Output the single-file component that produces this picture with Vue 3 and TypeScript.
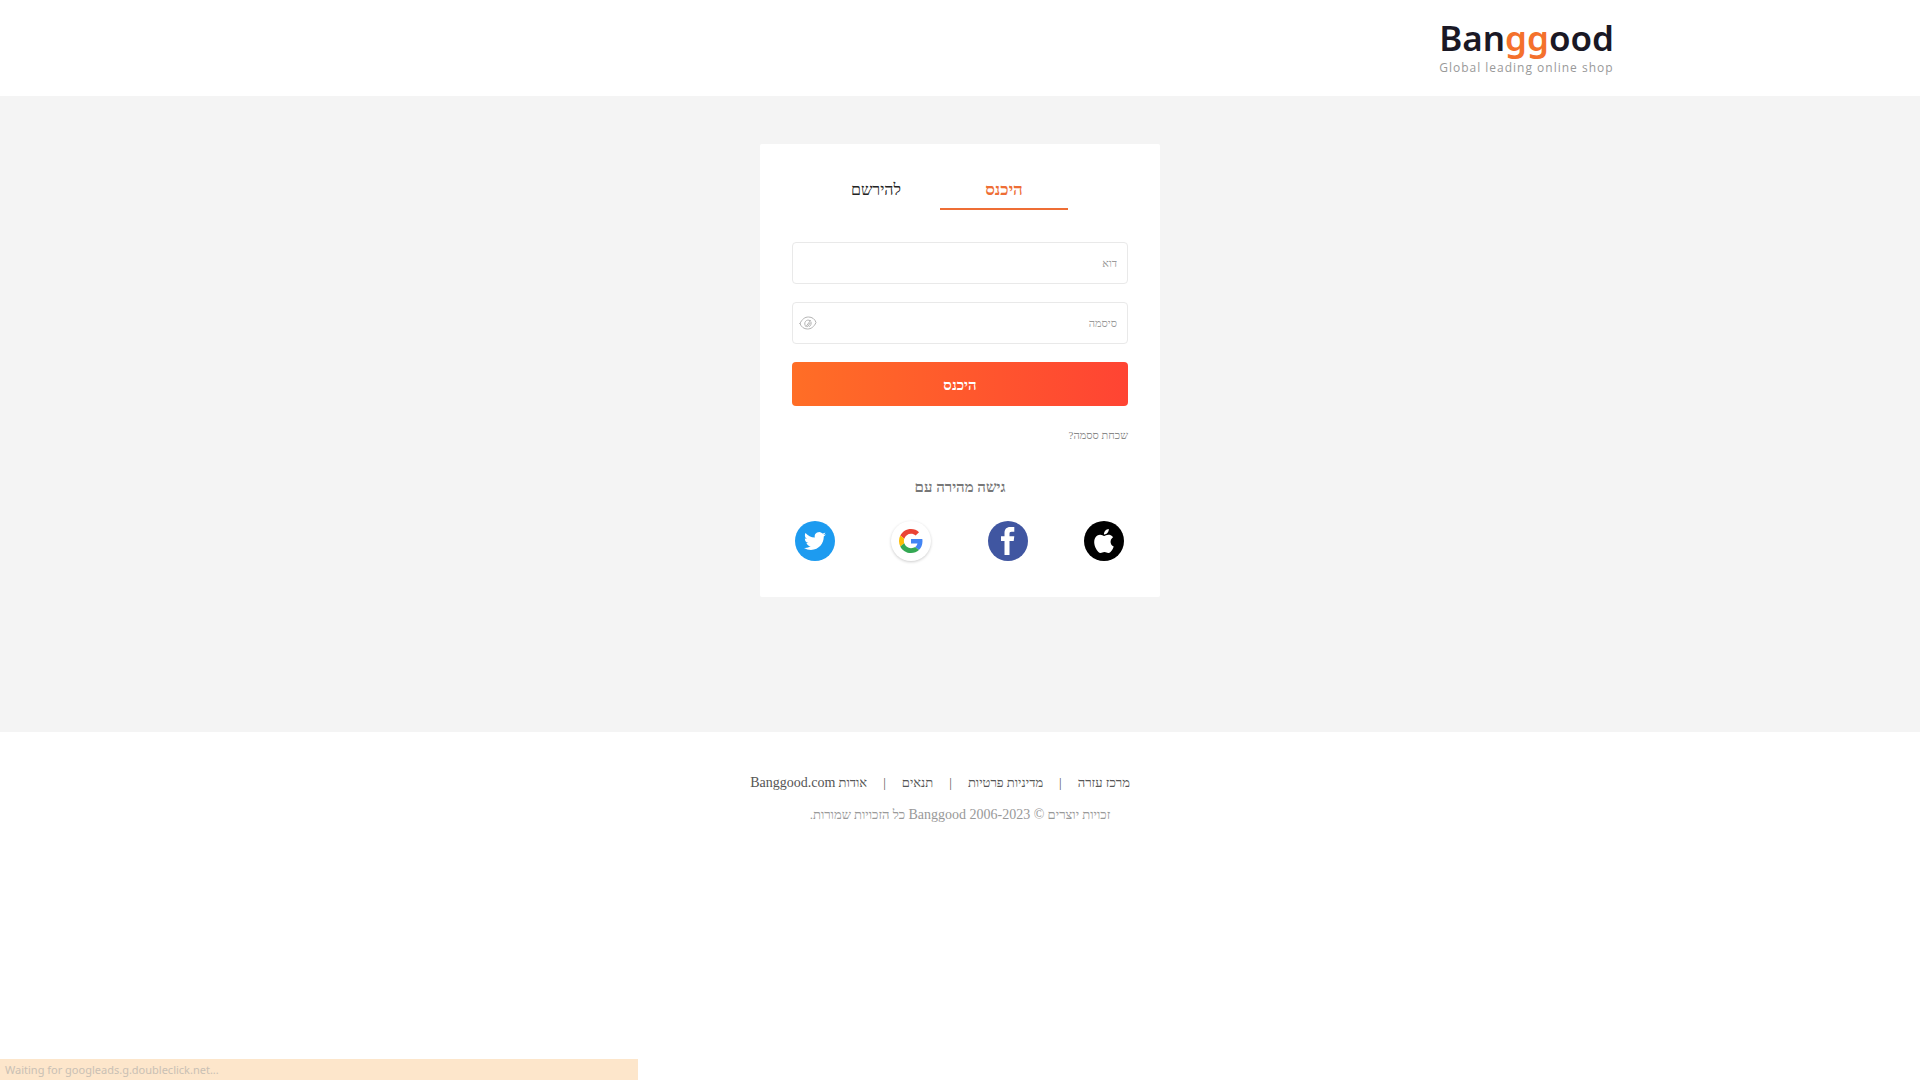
<script setup lang="ts">
import { ref } from 'vue'

type Tab = 'login' | 'register'

interface FooterLink {
  text: string
  brand?: string
}

const tab = ref<Tab>('login')
const email = ref('')
const password = ref('')
const showPassword = ref(false)

const footerLinks: FooterLink[] = [
  { text: 'מרכז עזרה' },
  { text: 'מדיניות פרטיות' },
  { text: 'תנאים' },
  { text: 'אודות', brand: 'Banggood.com' },
]
</script>

<template>
  <div class="page" dir="rtl" lang="he">
    <header class="header">
      <div class="header-inner">
        <a class="logo" href="#" dir="ltr">
          <span class="logo-word">Ban<span class="logo-accent">gg</span>ood</span>
          <span class="logo-tagline">Global leading online shop</span>
        </a>
      </div>
    </header>

    <main class="main">
      <section class="card">
        <div class="tabs">
          <button type="button" class="tab" :class="{ active: tab === 'login' }" @click="tab = 'login'">היכנס</button>
          <button type="button" class="tab" :class="{ active: tab === 'register' }" @click="tab = 'register'">להירשם</button>
        </div>

        <form class="form" @submit.prevent>
          <div class="field">
            <input v-model="email" type="text" placeholder="דוא" aria-label="דוא" />
          </div>
          <div class="field">
            <input
              v-model="password"
              :type="showPassword ? 'text' : 'password'"
              placeholder="סיסמה"
              aria-label="סיסמה"
            />
            <button type="button" class="eye" aria-label="סיסמה" @click="showPassword = !showPassword">
              <svg viewBox="0 0 18 14" width="18" height="14" fill="none" stroke="#b4b4b4" stroke-linecap="round">
                <path d="M1 7.500C3 3 6 1 9.500 1c3.500 0 6.500 2 7.500 5.500-2 4.500-5 6.500-8.500 6.500S2 11 1 7.500z" />
                <path d="M7 10.500C5.500 9.500 5.300 6.800 6.600 5.300 7.700 4 9.500 3.700 10.800 4.500M12 6c.5 1.700 0 3.500-1.500 4.500M7 10.500l4.500-6M8.500 10.800l2.500-3.500" />
              </svg>
            </button>
          </div>
          <button type="submit" class="submit">היכנס</button>
        </form>

        <a class="forgot" href="#">שכחת ססמה?</a>

        <h2 class="quick">גישה מהירה עם</h2>
        <div class="social">
          <a class="apple" href="#" aria-label="Apple">
            <svg viewBox="0 0 24 24" width="24" height="26" fill="#fff">
              <path d="M12.152 6.896c-.948 0-2.415-1.078-3.960-1.040-2.040.027-3.910 1.183-4.961 3.014-2.117 3.675-.546 9.103 1.519 12.090 1.013 1.454 2.208 3.090 3.792 3.039 1.520-.065 2.090-.987 3.935-.987 1.831 0 2.350.987 3.960.948 1.637-.026 2.676-1.480 3.676-2.948 1.156-1.688 1.636-3.325 1.662-3.415-.039-.013-3.182-1.221-3.220-4.857-.026-3.040 2.480-4.494 2.597-4.559-1.429-2.090-3.623-2.324-4.390-2.376-2-.156-3.675 1.090-4.610 1.090zM15.530 3.830c.843-1.012 1.400-2.427 1.245-3.830-1.207.052-2.662.805-3.532 1.818-.780.896-1.454 2.338-1.273 3.714 1.338.104 2.715-.688 3.559-1.701" />
            </svg>
          </a>
          <a class="facebook" href="#" aria-label="Facebook">
            <svg viewBox="0 0 14 28" width="14" height="28" fill="#fff">
              <path d="M3.500 28V14H0V9.200h3.500V6.300C3.500 2.200 5.400 0 9.300 0h4v4.800h-2.600c-1.900 0-2.200.8-2.200 2.200v2.200h4.800L12.700 14H8.500v14z" />
            </svg>
          </a>
          <a class="google" href="#" aria-label="Google">
            <svg viewBox="0 0 48 48" width="24" height="24">
              <path fill="#EA4335" d="M24 9.500c3.540 0 6.710 1.220 9.210 3.600l6.850-6.850C35.900 2.380 30.470 0 24 0 14.620 0 6.510 5.380 2.560 13.220l7.980 6.190C12.430 13.720 17.740 9.500 24 9.500z" />
              <path fill="#4285F4" d="M46.980 24.550c0-1.570-.15-3.090-.38-4.550H24v9.020h12.940c-.58 2.960-2.260 5.480-4.780 7.180l7.730 6c4.510-4.180 7.090-10.360 7.090-17.650z" />
              <path fill="#FBBC05" d="M10.530 28.590A14.500 14.500 0 0 1 9.770 24c0-1.600.27-3.140.76-4.590l-7.980-6.190A24 24 0 0 0 0 24c0 3.880.92 7.540 2.560 10.780z" />
              <path fill="#34A853" d="M24 48c6.480 0 11.930-2.130 15.890-5.810l-7.730-6c-2.150 1.450-4.920 2.300-8.160 2.300-6.260 0-11.570-4.220-13.470-9.910l-7.980 6.190C6.510 42.620 14.620 48 24 48z" />
            </svg>
          </a>
          <a class="twitter" href="#" aria-label="Twitter">
            <svg viewBox="0 0 24 24" width="22" height="22" fill="#fff">
              <path d="M23.950 4.570a10 10 0 0 1-2.820.770 4.960 4.960 0 0 0 2.160-2.720c-.950.550-2 .950-3.130 1.180a4.920 4.920 0 0 0-8.380 4.480C7.690 8.090 4.070 6.130 1.640 3.160a4.820 4.820 0 0 0-.660 2.470c0 1.710.870 3.210 2.190 4.100a4.900 4.900 0 0 1-2.230-.620v.060a4.920 4.920 0 0 0 3.950 4.830 5 5 0 0 1-2.210.080 4.940 4.940 0 0 0 4.600 3.420A9.870 9.870 0 0 1 0 19.540a13.990 13.990 0 0 0 7.550 2.210c9.050 0 14-7.500 14-13.980 0-.210 0-.420-.020-.630a9.940 9.940 0 0 0 2.420-2.570z" />
            </svg>
          </a>
        </div>
      </section>
    </main>

    <footer class="footer">
      <ul class="links">
        <li v-for="link in footerLinks" :key="link.text">
          <a href="#">{{ link.text }}<template v-if="link.brand">&nbsp;<span class="latin">{{ link.brand }}</span></template></a>
        </li>
      </ul>
      <p class="copyright">זכויות יוצרים <span class="latin">© 2006-2023 Banggood</span> כל הזכויות שמורות.</p>
    </footer>

    <div class="status" dir="ltr" lang="en">Waiting for googleads.g.doubleclick.net...</div>
  </div>
</template>

<style>
body {
  margin: 0;
  background: #fff;
}
</style>

<style scoped>
.page {
  min-height: 100vh;
  font-family: 'Liberation Serif', serif;
  font-size: 14px;
  color: #333;
}

.page * {
  box-sizing: border-box;
}

a {
  color: inherit;
  text-decoration: none;
}

button,
input {
  font-family: inherit;
}

button {
  padding: 0;
  border: 0;
  background: none;
  cursor: pointer;
}

.header-inner {
  display: flex;
  max-width: 1308px;
  height: 96px;
  margin: 0 auto;
  padding-top: 16px;
}

.logo {
  display: flex;
  flex-direction: column;
}

.logo-word {
  font: 600 35px/44px 'Noto Sans', sans-serif;
  color: #1a1825;
}

.logo-accent {
  color: #f4712c;
}

.logo-tagline {
  font: 12px/16px 'Open Sans', sans-serif;
  letter-spacing: 1px;
  color: #999;
}

.main {
  min-height: 636px;
  padding: 48px 0;
  background: #f4f4f4;
}

.card {
  width: 400px;
  margin: 0 auto;
  padding: 32px 32px 36px;
  border-radius: 2px;
  background: #fff;
}

.tabs {
  display: flex;
  justify-content: center;
  padding-inline-start: 40px;
}

.tab {
  width: 128px;
  height: 34px;
  padding-bottom: 4px;
  border-bottom: 2px solid transparent;
  font-size: 16px;
  color: #222;
}

.tab.active {
  border-bottom-color: #ee6e35;
  font-size: 17px;
  font-weight: 700;
  color: #ee6e35;
}

.form {
  display: flex;
  flex-direction: column;
  gap: 18px;
  margin-top: 32px;
}

.field {
  position: relative;
  display: flex;
}

.field input {
  width: 100%;
  height: 42px;
  padding: 0 10px;
  border: 1px solid #e9e9e9;
  border-radius: 4px;
  outline: 0;
  background: #fff;
  font-size: 11px;
  color: #333;
}

.field input::placeholder {
  color: #999;
}

.eye {
  position: absolute;
  top: 0;
  left: 7px;
  display: flex;
  align-items: center;
  height: 42px;
}

.submit {
  height: 44px;
  padding-top: 2px;
  border-radius: 4px;
  background: linear-gradient(90deg, #ff6e26, #ff4433);
  font-size: 15px;
  font-weight: 700;
  color: #fff;
}

.forgot {
  display: block;
  margin-top: 20px;
  font-size: 11px;
  line-height: 18px;
  color: #888;
}

.quick {
  margin: 33px 0 24px;
  font-size: 15px;
  line-height: 20px;
  text-align: center;
  color: #777;
}

.social {
  display: flex;
  justify-content: space-between;
  padding: 0 4px 0 3px;
}

.social a {
  display: flex;
  align-items: center;
  justify-content: center;
  width: 40px;
  height: 40px;
  border-radius: 50%;
}

.apple {
  background: #000;
}

.facebook {
  background: #4056a1;
}

.google {
  background: #fff;
  box-shadow: 0 1px 3px rgba(0, 0, 0, 0.2);
}

.twitter {
  background: #1d9bf0;
}

.footer {
  padding-top: 41px;
  font-size: 13px;
}

.latin {
  font-size: 14px;
}

.links {
  display: flex;
  justify-content: center;
  margin: 0;
  padding: 0;
  padding-inline-start: 40px;
  list-style: none;
  line-height: 20px;
  color: #555;
}

.links li + li::before {
  content: '|';
  margin: 0 16px;
}

.copyright {
  margin: 12px 0 0;
  line-height: 20px;
  text-align: center;
  color: #999;
}

.status {
  position: fixed;
  bottom: 0;
  left: 0;
  width: 638px;
  max-width: 100%;
  padding: 0 5px;
  background: #fde6cb;
  font: 11px/21px 'Noto Sans', sans-serif;
  color: #c9c0b4;
}
</style>
